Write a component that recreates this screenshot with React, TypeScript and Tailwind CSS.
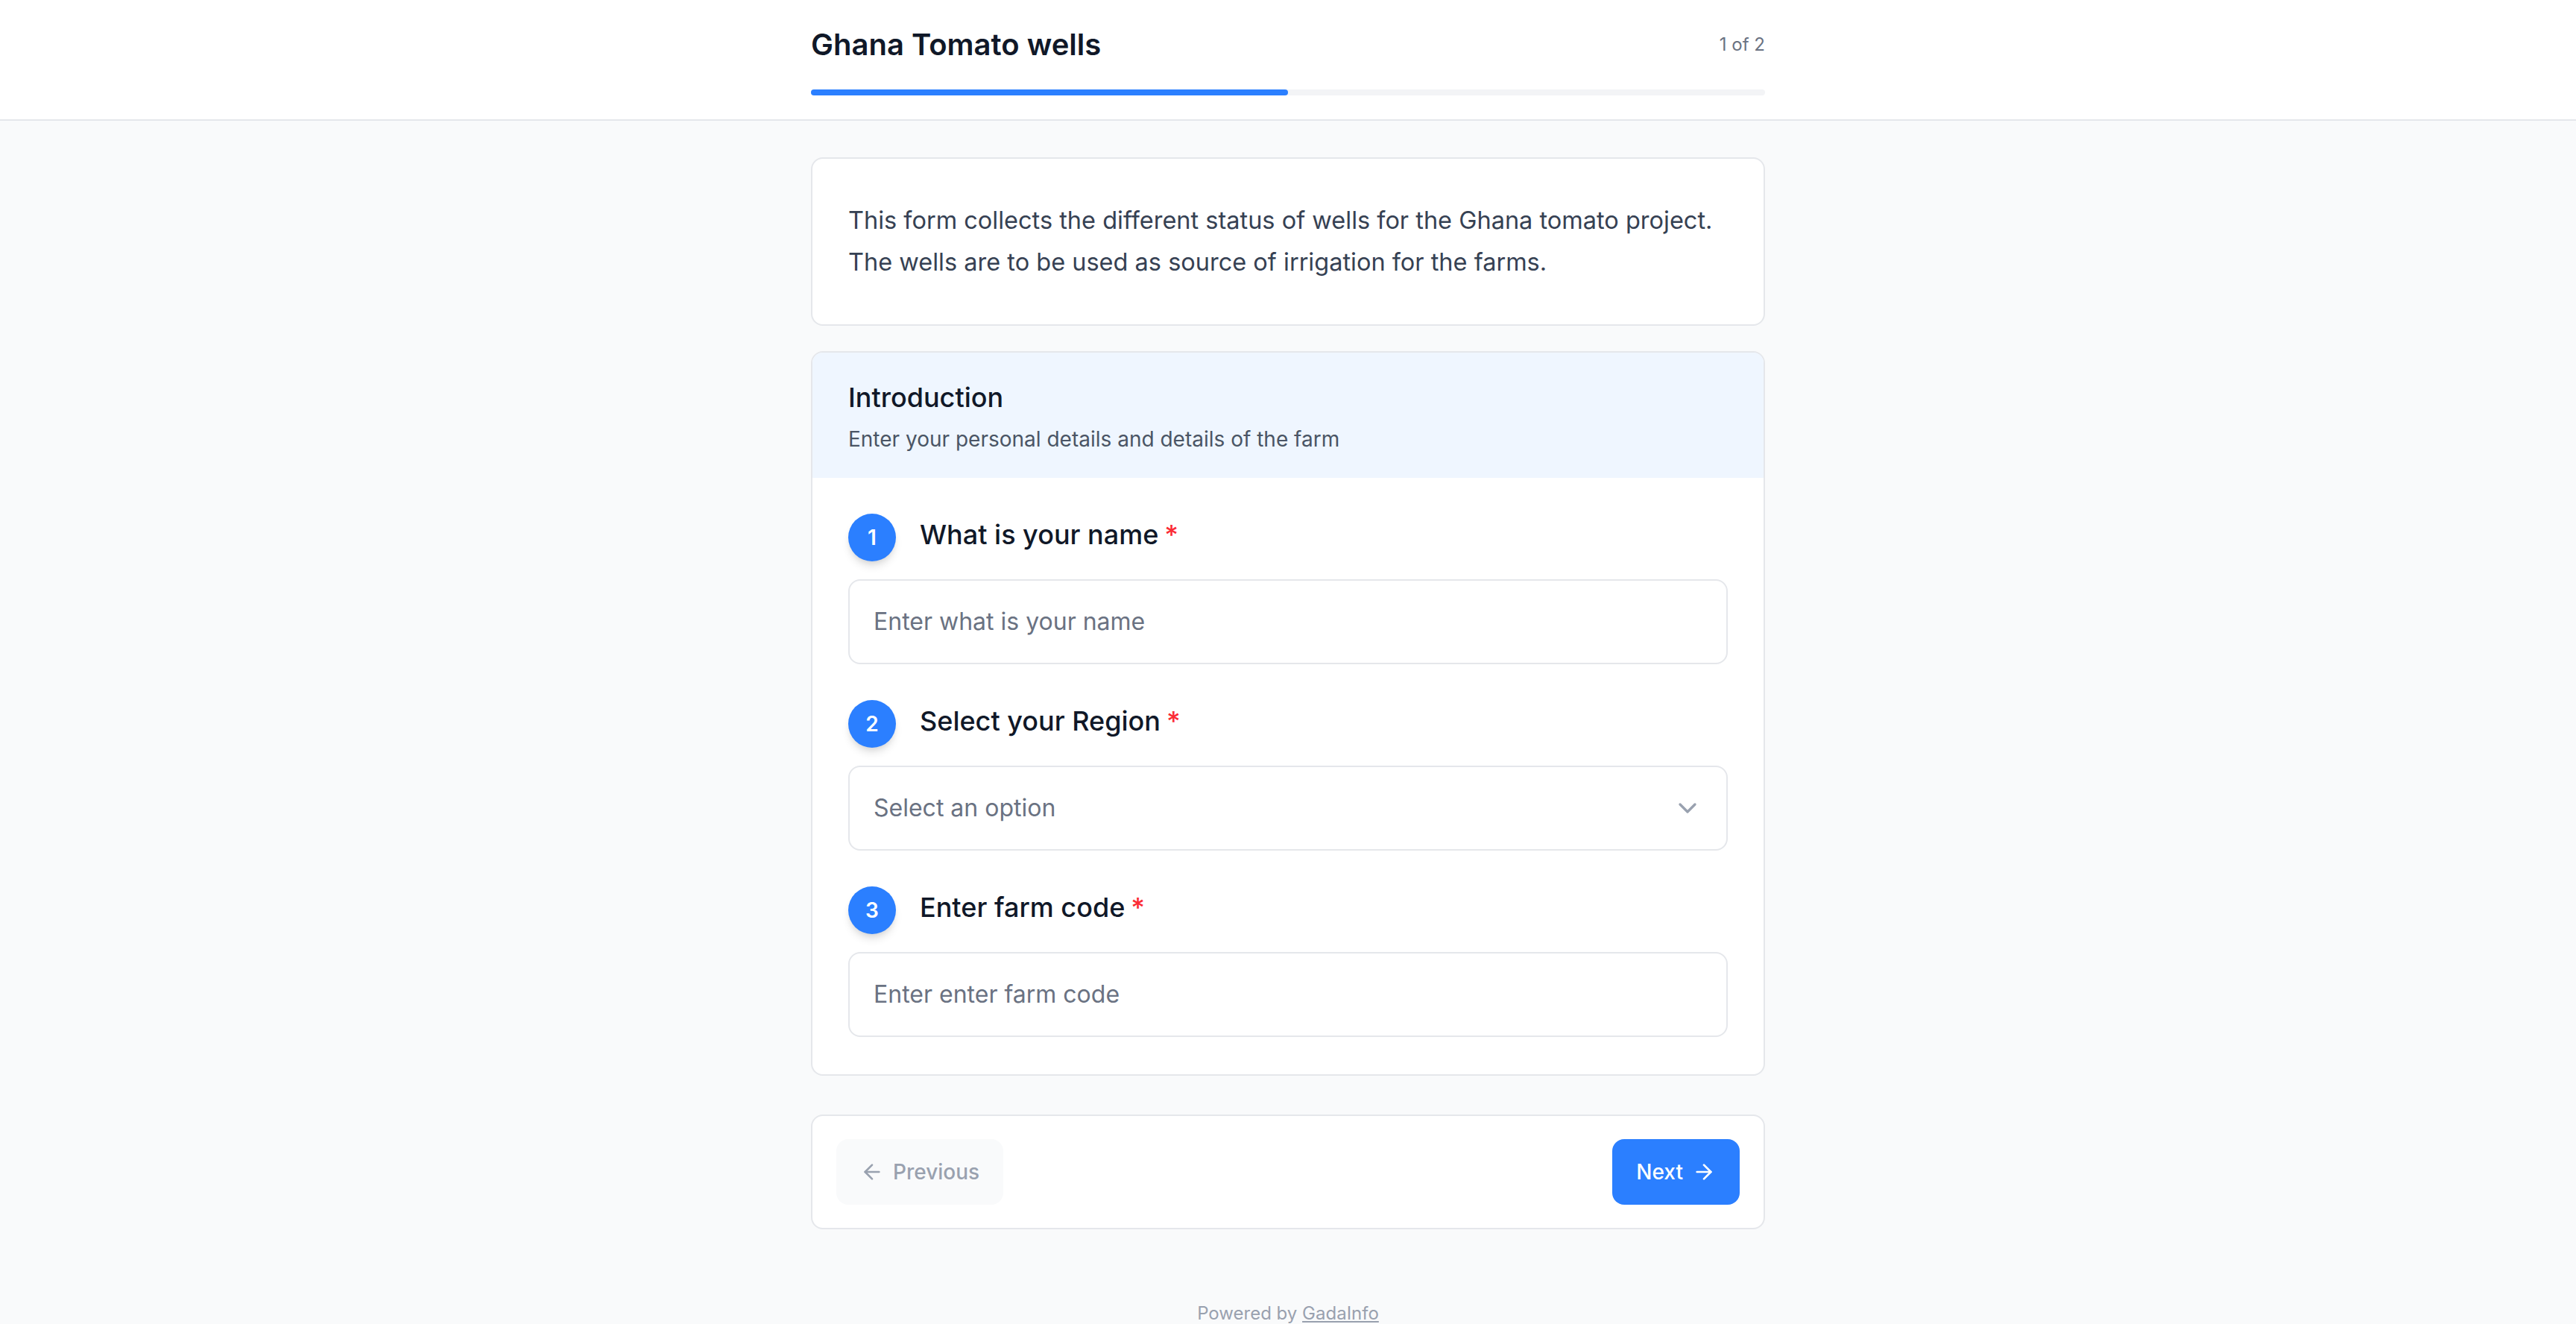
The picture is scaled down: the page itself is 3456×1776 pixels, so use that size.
import React from "react";
import { ChevronDown, ArrowLeft, ArrowRight } from "lucide-react";

type Q = { n: number; label: string; kind: "text" | "select"; placeholder: string };

const questions: Q[] = [
  { n: 1, label: "What is your name", kind: "text", placeholder: "Enter what is your name" },
  { n: 2, label: "Select your Region", kind: "select", placeholder: "Select an option" },
  { n: 3, label: "Enter farm code", kind: "text", placeholder: "Enter enter farm code" },
];

function Question({ q }: { q: Q }) {
  return (
    <div>
      <div className="mb-6 flex items-start gap-8">
        <div className="flex h-16 w-16 shrink-0 items-center justify-center rounded-full bg-blue-500 text-[28px] font-semibold text-white shadow-[0_8px_12px_-2px_rgba(0,0,0,0.12),0_4px_8px_-4px_rgba(0,0,0,0.1)]">
          {q.n}
        </div>
        <label className="text-[36px] leading-[56px] font-medium text-gray-900">
          {q.label}
          <span className="ml-2 text-red-500">*</span>
        </label>
      </div>
      {q.kind === "text" ? (
        <input
          type="text"
          placeholder={q.placeholder}
          className="block w-full rounded-2xl border-2 border-gray-200 bg-white px-8 py-[31px] text-[32px] leading-[48px] text-gray-900 outline-none placeholder:text-gray-500"
        />
      ) : (
        <button
          type="button"
          className="flex w-full items-center justify-between rounded-2xl border-2 border-gray-200 bg-white px-8 py-[31px] text-left text-[32px] leading-[48px] text-gray-500"
        >
          <span>{q.placeholder}</span>
          <ChevronDown size={40} strokeWidth={2} className="text-gray-400" />
        </button>
      )}
    </div>
  );
}

export default function App() {
  return (
    <div className="min-h-screen bg-gray-50 font-['Inter',sans-serif]">
      <header className="border-b-2 border-gray-200 bg-white">
        <div className="mx-auto max-w-[1344px] px-8 py-8">
          <div className="mb-8 flex items-center justify-between">
            <h1 className="text-[40px] leading-[56px] font-semibold text-gray-900">Ghana Tomato wells</h1>
            <span className="text-[24px] leading-[32px] text-gray-500">1 of 2</span>
          </div>
          <div className="h-2 w-full rounded-full bg-gray-100">
            <div className="h-2 w-1/2 rounded-full bg-blue-500" />
          </div>
        </div>
      </header>

      <main className="mx-auto max-w-[1344px] px-8 pt-[49px]">
        <div className="rounded-2xl border-2 border-gray-200 bg-white px-12 py-[55px]">
          <p className="text-[32.5px] leading-[56px] text-gray-700">
            This form collects the different status of wells for the Ghana tomato project.
            <br />
            The wells are to be used as source of irrigation for the farms.
          </p>
        </div>

        <section className="mt-[34px] overflow-hidden rounded-2xl border-2 border-gray-200 bg-white">
          <div className="bg-blue-50 px-12 py-8">
            <h2 className="text-[36px] leading-[56px] font-medium text-gray-900">Introduction</h2>
            <p className="mt-2 text-[28px] leading-[40px] text-gray-600">
              Enter your personal details and details of the farm
            </p>
          </div>
          <div className="flex flex-col gap-12 px-12 pt-12 pb-[50px]">
            {questions.map((q) => (
              <Question key={q.n} q={q} />
            ))}
          </div>
        </section>

        <div className="mt-[52px] flex items-center justify-between rounded-2xl border-2 border-gray-200 bg-white px-8 py-[31px]">
          <button
            type="button"
            disabled
            className="flex items-center gap-3 rounded-2xl bg-gray-50 px-8 py-6 text-[28px] leading-[40px] font-medium text-gray-400"
          >
            <ArrowLeft size={32} strokeWidth={2} />
            Previous
          </button>
          <button
            type="button"
            className="flex items-center gap-3 rounded-2xl bg-blue-500 px-8 py-6 text-[28px] leading-[40px] font-medium text-white"
          >
            Next
            <ArrowRight size={32} strokeWidth={2} />
          </button>
        </div>
      </main>

      <footer className="mt-[97px] pb-12 text-center text-[24px] leading-[32px] text-gray-400">
        Powered by{" "}
        <a href="#" className="underline">
          GadaInfo
        </a>
      </footer>
    </div>
  );
}
